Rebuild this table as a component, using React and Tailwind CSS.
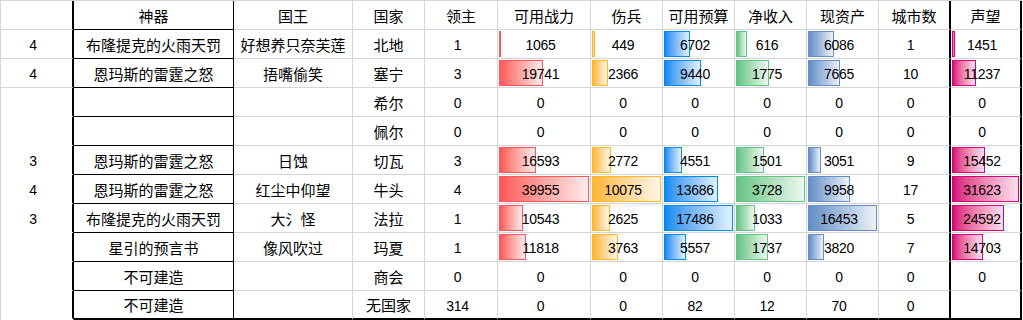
import React from 'react';

const GRAY = 'border-[#d4d4d4]';

// column widths include the right border
const columns = [
  { key: 'a', cls: 'w-[73px] border-r-2 border-r-black' },
  { key: 'b', cls: 'w-[160px] border-r border-r-black' },
  { key: 'c', cls: 'w-[119px] border-r border-r-[#d4d4d4]' },
  { key: 'd', cls: 'w-[72px] border-r border-r-[#d4d4d4]' },
  { key: 'e', cls: 'w-[73px] border-r border-r-[#d4d4d4]' },
  { key: 'f', cls: 'w-[93px] border-r border-r-[#d4d4d4]', bar: 'red', inner: 92 },
  { key: 'g', cls: 'w-[72px] border-r border-r-[#d4d4d4]', bar: 'orange', inner: 71 },
  { key: 'h', cls: 'w-[72px] border-r border-r-[#d4d4d4]', bar: 'blue', inner: 71 },
  { key: 'i', cls: 'w-[72px] border-r border-r-[#d4d4d4]', bar: 'green', inner: 71 },
  { key: 'j', cls: 'w-[72px] border-r border-r-[#d4d4d4]', bar: 'steel', inner: 71 },
  { key: 'k', cls: 'w-[72px] border-r-2 border-r-black' },
  { key: 'l', cls: 'w-[71px] border-r-2 border-r-black', bar: 'pink', inner: 69 },
];

const barStyles = {
  red: 'border-[#ff555a] bg-linear-to-r from-[#ff555a] to-[#ffebeb]',
  orange: 'border-[#ffb628] bg-linear-to-r from-[#ffb628] to-[#fff6e5]',
  blue: 'border-[#008aef] bg-linear-to-r from-[#008aef] to-[#e0f1fd]',
  green: 'border-[#63c384] bg-linear-to-r from-[#63c384] to-[#ecf8f0]',
  steel: 'border-[#638ec6] bg-linear-to-r from-[#638ec6] to-[#ecf1f8]',
  pink: 'border-[#d6007b] bg-linear-to-r from-[#d6007b] to-[#fae0ef]',
};

const header = ['', '神器', '国王', '国家', '领主', '可用战力', '伤兵', '可用预算', '净收入', '现资产', '城市数', '声望'];

const rows = [
  ['4', '布隆提克的火雨天罚', '好想养只奈芙莲', '北地', 1, 1065, 449, 6702, 616, 6086, 1, 1451],
  ['4', '恩玛斯的雷霆之怒', '捂嘴偷笑', '塞宁', 3, 19741, 2366, 9440, 1775, 7665, 10, 11237],
  ['', '', '', '希尔', 0, 0, 0, 0, 0, 0, 0, 0],
  ['', '', '', '佩尔', 0, 0, 0, 0, 0, 0, 0, 0],
  ['3', '恩玛斯的雷霆之怒', '日蚀', '切瓦', 3, 16593, 2772, 4551, 1501, 3051, 9, 15452],
  ['4', '恩玛斯的雷霆之怒', '红尘中仰望', '牛头', 4, 39955, 10075, 13686, 3728, 9958, 17, 31623],
  ['3', '布隆提克的火雨天罚', '大氵怪', '法拉', 1, 10543, 2625, 17486, 1033, 16453, 5, 24592],
  ['', '星引的预言书', '像风吹过', '玛夏', 1, 11818, 3763, 5557, 1737, 3820, 7, 14703],
  ['', '不可建造', '', '商会', 0, 0, 0, 0, 0, 0, 0, 0],
  ['', '不可建造', '', '无国家', 314, 0, 0, 82, 12, 70, 0, ''],
];

const maxes = columns.map((c, i) =>
  c.bar ? Math.max(...rows.map((r) => (typeof r[i] === 'number' ? r[i] : 0))) : 0
);

const isNum = (v) => typeof v === 'number' || /^\d+$/.test(v);

const bottomBorder = (colIdx, rowIdx, last) => {
  if (colIdx === 0) {
    if (last) return 'border-b-2 border-b-transparent';
    return rowIdx <= 2 ? 'border-b border-b-[#d4d4d4]' : 'border-b border-b-transparent';
  }
  if (last) return 'border-b-2 border-b-black';
  if (colIdx === 1) return 'border-b border-b-black';
  return 'border-b border-b-[#d4d4d4]';
};

const Cell = ({ col, colIdx, rowIdx, last, value }) => {
  const num = value !== '' && isNum(value);
  let bar = null;
  if (col.bar && typeof value === 'number' && value > 0) {
    const w = Math.round((value / maxes[colIdx]) * (col.inner - 2));
    if (w >= 1) {
      bar = (
        <div
          className={`absolute left-[1px] top-[1px] bottom-[1px] border ${barStyles[col.bar]}`}
          style={{ width: w }}
        />
      );
    }
  }
  return (
    <div
      className={`relative flex items-center justify-center shrink-0 ${col.cls} ${bottomBorder(colIdx, rowIdx, last)}`}
    >
      {bar}
      {num ? (
        <span className="relative pr-[7px] pt-[2px] font-['Liberation_Sans',sans-serif] text-[14px] tracking-[-0.3px] leading-none">
          {value}
        </span>
      ) : (
        <span className="relative font-['Noto_Sans_CJK_SC','Noto_Sans',sans-serif] text-[15px] leading-none whitespace-nowrap">
          {value}
        </span>
      )}
    </div>
  );
};

const Row = ({ values, rowIdx, last }) => (
  <div className="flex h-[29px]">
    {columns.map((col, i) => (
      <Cell key={col.key} col={col} colIdx={i} rowIdx={rowIdx} last={last} value={values[i]} />
    ))}
  </div>
);

export default function App() {
  return (
    <div className="w-[1023px] h-[320px] bg-white text-black overflow-hidden">
      <div className={`w-[1022px] border-l border-t ${GRAY}`}>
        <Row values={header} rowIdx={0} />
        {rows.map((r, i) => (
          <Row key={i} values={r} rowIdx={i + 1} last={i === rows.length - 1} />
        ))}
      </div>
    </div>
  );
}
